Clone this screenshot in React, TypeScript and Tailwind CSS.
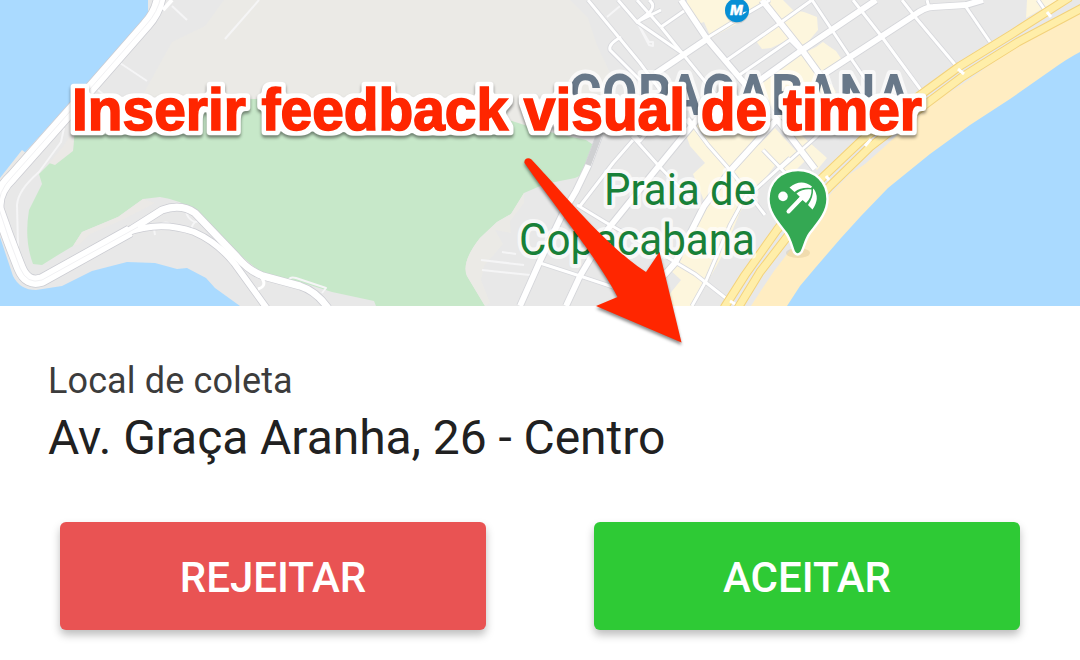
const water = '#aadaff';

const minorRoads = [
  'M588 0 L640 63 L660 90 L690 125',
  'M621 37 Q608 44 610 50 L640 80',
  'M618 0 L637 22 L661 10 M649 0 Q656 5 650 12 L637 22',
  'M637 22 L682 53 L712 90 L732 118',
  'M637 0 L661 27',
  'M661 27 L684 11',
  'M682 53 L661 27',
  'M707 38 L746 14 L770 0',
  'M727 60 L780 23 L812 0',
  'M738 76 L790 40 L800 50',
  'M812 0 L832 30 L850 57 L870 86',
  'M853 0 L882 37 L921 90',
  'M902 0 L916 18 L958 68',
  'M927 0 L929 7',
  'M966 7 L990 42',
  'M1038 0 L1047 13',
  'M633 140 L613 163 L580 206',
  'M650 130 L640 141 L619 118 M632 136 L658 165 L690 198',
  'M688 118 L708 145 L730 170 L752 198 L765 215',
  'M577 205 L605 222 L655 250 L695 274 L732 303',
  'M540 263 L580 276 L622 290',
  'M780 169 L815 138 L840 112',
  'M748 192 L730 225 L706 281 L692 306',
  'M763 150 L790 178 M755 190 L790 158',
];

const midRoads = [
  'M681 0 L707 39 L745 84 L780 123 L815 169',
  'M762 0 L802 50 L828 86',
  'M655 74 L707 39',
  'M752 86 L802 50 L876 0',
  'M824 74 L913 16 Q925 7 933 7 L966 5 L983 0',
  'M600 134 L588 166 L576 191 L563 213 L540 261 L520 306',
  'M705 110 L680 140 L658 167 L608 229 L580 276 L566 306',
  'M778 118 L730 171 L704 206 L675 263 L637 306',
];

const faintPaths = [
  'M172 6 L187 20',
  'M120 63 L147 81',
  'M259 0 L225 39',
  'M98 90 L108 98 M607 17 L620 6',
  'M64 128 L61 142 L39 172 Q18 190 17 205 L18 246 L11 250',
  'M637 22 L649 42 L653 42 L653 46 L649 45 Z',
  'M159 226 Q166 219 172 226 M154 229 L155 235',
  'M186 211 Q187 219 195 222 L203 220 M195 222 Q191 226 192 230',
  'M288 281 Q290 276 296 278 L326 288 L322 293',
  'M502 252 L516 254 M481 260 L524 265 M482 270 L530 275',
];

const highway = [
  'M160 -4 Q158 12 146 25 L90 89 L12 177 Q-4 192 -2 209 Q8 238 20 268 Q27 285 42 280 L132 229 L162 210 Q181 203 195 213 L237 257 Q249 271 263 276 L300 286 Q316 291 328 308',
  'M126 233 Q160 220 194 232 Q217 242 234 263 L268 310',
  'M261 277 Q268 286 258 289',
];

const coast = [
  'M724 308 L745 275 L777 230 L798 203 L823 177 L862 140 L908 104 L960 66 L1012 34 L1070 -3',
  'M738 308 L760 272 L787 237 L806 212 L830 186 L870 147 L914 113 L962 77 L1018 42 L1084 7',
];

const shops = [
  'M687 0 L762 0 L757 8 L740 22 L711 38 L704 22 L698 24 L694 15 L687 7 Z',
  'M765 0 L783 0 L793 10 L804 12 L817 17 L818 30 L808 42 L800 46 L776 15 Z',
  'M756 41 L778 26 L790 39 L771 48 L762 49 Z',
  'M802 54 L816 47 L823 42 L830 47 L836 51 L842 60 L824 72 L836 92 L814 120 L783 119 L827 158 L817 170 L808 160 L770 110 L755 86 Z',
  'M685 132 L705 115 L777 120 L758 143 L776 164 L740 212 L722 256 L694 306 L660 306 L681 280 L668 268 L705 203 L693 174 L705 163 L690 146 Z',
  'M790 176 L805 161 L775 128 L757 147 Z',
  'M1027 0 L1058 0 L1026 18 Z M1035 32 L1058 20 L1055 29 Z',
];

function MapDrawing() {
  return (
    <svg className="block h-[306px] w-full" viewBox="0 0 1080 306" aria-hidden="true">
      <rect width="1080" height="306" fill="#e8e8e8" />
      <path d="M224 0 L205 26 L172 42 L140 100 L300 130 L530 130 L612 100 L610 73 L597 45 L588 18 L570 0 Z" fill="#ebeae6" />
      <path d="M75 100 L258 99 L400 98 L512 121 L540 130 L586 140 L595 146 L590 171 L575 178 L545 184 L524 193 L511 214 L497 222 L480 238 Q461 262 467 276 L485 306 L376 306 L374 301 L332 292 L310 285 L263 274 L240 255 L195 211 Q178 199 160 197 L143 199 L118 217 L82 232 L73 246 L58 255 L42 265 L33 264 Q24 240 29 210 L42 184 L39 174 L50 163 L73 150 Z" fill="#c7e8c9" />
      <path d="M524 193 L511 214 L497 222 L480 238 Q461 262 467 276 L485 306 L490 303 L481 280 L484 266 L503 244 L495 230 L511 233 L510 221 L524 203 Z" fill="#ebeae6" />
      <path d="M75 128 L64 145 L49 163 L55 165 L73 151 Z M143 199 L118 217 L82 232 L73 246 L80 244 L90 234 L122 220 L155 203 Z" fill="#ebe9e6" />
      <path d="M0 0 L148 0 L148 16 L0 180 Z" fill={water} />
      <path d="M0 178 L22 150 L26 153 L0 184 Z" fill="#ebe9e6" />
      <path d="M0 237 L13 276 Q20 290 36 290 L62 286 L92 271 L127 262 L155 263 L177 269 L187 268 L206 278 L215 288 L240 306 L0 306 Z" fill={water} />
      {shops.map((d) => <path key={d} d={d} fill="#fdf6dd" />)}
      <path d="M751 306 L760 292 L774 271 L791 249 L832 192 L850 174 L865 164 L882 149 L918 116 L935 100 L955 89 L973 77 L1000 57 L1030 38 L1080 10 L1080 60 L790 306 Z" fill="#ffedc2" />
      <path d="M787 306 L800 286 L816 267 L841 238 L861 216 L888 188 L930 154 L970 125 L1010 99 L1050 71 Q1068 58 1080 52 L1080 306 Z" fill={water} />

      <g fill="none" strokeLinejoin="round">
        {faintPaths.map((d) => <path key={d} d={d} stroke="#f5f5f6" strokeWidth="2" />)}
        {minorRoads.map((d) => <path key={d} d={d} stroke="#d7d8dc" strokeWidth="4.6" />)}
        {midRoads.map((d) => <path key={d} d={d} stroke="#d5d6da" strokeWidth="7.6" />)}
        {minorRoads.map((d) => <path key={d} d={d} stroke="#fff" strokeWidth="3" />)}
        {midRoads.map((d) => <path key={d} d={d} stroke="#fff" strokeWidth="5.8" />)}
        <path d="M602 128 L588 165" stroke="#cfd0d2" strokeWidth="6" />
        <path d={highway[0]} stroke="#cbccd2" strokeWidth="8.500" />
        <path d={highway[1]} stroke="#cbccd2" strokeWidth="7.5" />
        <path d="M160 -4 Q158 12 146 25 L90 89 L12 177 Q-4 192 -2 209 Q8 238 20 268 Q27 285 42 280 L130 231" stroke="#cbccd2" strokeWidth="13" />
        <path d="M172 0 L163 10" stroke="#fff" strokeWidth="4" />
        <path d={highway[0]} stroke="#fff" strokeWidth="7" />
        <path d={highway[1]} stroke="#fff" strokeWidth="6" />
        <path d={highway[2]} stroke="#fff" strokeWidth="3" />
        <path d="M160 -4 Q158 12 146 25 L90 89 L12 177 Q-4 192 -2 209 Q8 238 20 268 Q27 285 42 280 L130 231" stroke="#fff" strokeWidth="11.5" />
        <path d="M161 -4 Q158 12 146 25 L90 89 L12 177 Q-3 192 -1 209 Q8 238 20 268 Q27 285 42 280 L138 227" stroke="#f1f1f3" strokeWidth="1" />
        {coast.map((d) => <path key={d} d={d} stroke="#f3d27b" strokeWidth="9" />)}
        {coast.map((d) => <path key={d} d={d} stroke="#ffeea9" strokeWidth="7" />)}
        <path d="M958 69 L964 74 M1047 12 L1051 17 M865 146 L871 139 M826 176 L829 180 M730 301 L735 304" stroke="#fff" strokeWidth="3" />
      </g>

      <g fontFamily="Roboto, sans-serif" strokeLinejoin="round" paintOrder="stroke" stroke="#fff" strokeOpacity=".68" strokeWidth="8">
        <text transform="translate(568 115) scale(.9 1)" fontSize="57" fontWeight="700" fill="#687889" textLength="381">COPACABANA</text>
        <text x="604" y="205" fontSize="44.500" fill="#188038" textLength="152" lengthAdjust="spacingAndGlyphs">Praia de</text>
        <text x="519" y="255" fontSize="44.500" fill="#188038" textLength="236" lengthAdjust="spacingAndGlyphs">Copacabana</text>
      </g>

      <circle cx="737" cy="11.500" r="12" fill="#b8b9bb" opacity=".6" />
      <circle cx="737" cy="10.300" r="12" fill="#078fd5" />
      <text x="730" y="14.800" fontFamily="Inter, sans-serif" fontSize="13.500" fontWeight="800" fontStyle="italic" fill="#fff" stroke="#fff" strokeWidth=".3">M</text>
      <path d="M742.500 14.800 L747 11.500 L743.500 12 Z" fill="#fff" />

      <ellipse cx="798" cy="253" rx="12" ry="5" fill="#c6aa72" opacity=".25" />
      <path d="M798 170 C781 170 768.500 182 768.500 199 C768.500 213 779 224 786 233 C791 240 792 248 794 252 Q797.500 257 801.500 252 C804 248 805 240 810 233 C817 224 827.500 213 827.500 199 C827.500 182 815 170 798 170 Z" fill="#34a853" stroke="#fff" strokeWidth="2.400" />
      <circle cx="783" cy="196.400" r="4.800" fill="#fff" />
      <path d="M788.500 211.500 L801 198.500" stroke="#fff" strokeWidth="4" strokeLinecap="round" />
      <path d="M789.500 187.500 Q801 178 812 186.500 L811 188 Q801 187 794.500 192 Z" fill="#fff" />
      <path d="M796.500 193.500 Q803 188.500 811.500 189.500 Q812 197 806 203 L802.500 200 L799 202.500 L797 200 L800 197 Z" fill="#fff" />
      <path d="M813.500 188.500 Q820.500 198 812.500 209.500 L808 205 Q813.500 197 813 189.500 Z" fill="#fff" />
    </svg>
  );
}

function Annotation() {
  return (
    <svg className="pointer-events-none absolute left-0 top-0 h-[360px] w-[1080px]" viewBox="0 0 1080 360">
      <defs>
        <filter id="lift" x="-10%" y="-20%" width="120%" height="150%" colorInterpolationFilters="sRGB">
          <feDropShadow dx="0" dy="2.500" stdDeviation="1.800" floodColor="#000" floodOpacity=".45" />
        </filter>
        <filter id="halo" x="-5%" y="-30%" width="110%" height="170%" colorInterpolationFilters="sRGB">
          <feMorphology in="SourceAlpha" operator="dilate" radius="3.500" result="wide" />
          <feGaussianBlur in="wide" stdDeviation="1.500" result="soft" />
          <feComponentTransfer in="soft" result="edge">
            <feFuncR type="linear" slope="0" intercept="1" />
            <feFuncG type="linear" slope="0" intercept="1" />
            <feFuncB type="linear" slope="0" intercept="1" />
            <feFuncA type="linear" slope="4" intercept="-1" />
          </feComponentTransfer>
          <feMerge result="joined">
            <feMergeNode in="edge" />
            <feMergeNode in="SourceGraphic" />
          </feMerge>
          <feDropShadow in="joined" dx="0" dy="2.500" stdDeviation="1.500" floodColor="#000" floodOpacity=".45" />
        </filter>
      </defs>
      <text x="72" y="129.800" filter="url(#halo)" fontFamily="Liberation Sans, sans-serif" fontSize="58.500" fontWeight="700" fill="#ff2600" stroke="#ff2600" strokeWidth="1.600" textLength="850" lengthAdjust="spacingAndGlyphs">Inserir feedback visual de timer</text>
      <path filter="url(#lift)" d="M524.500 163 C523.500 159 528 156.500 531.500 159.500 C565 195 606 246 646 272 L659.500 252 L681.500 342.500 L596 306 L617.500 297 C597 257 554 206 524.500 163 Z" fill="#ff2600" />
    </svg>
  );
}

export default function App() {
  return (
    <main className="relative h-[660px] w-[1080px] overflow-hidden bg-white font-[Roboto,sans-serif]">
      <MapDrawing />
      <section className="flex h-[354px] flex-col px-12 pt-[54px]">
        <p className="h-[42px] text-[36px] leading-[42px] tracking-[0.12px] text-[#3c3c3c]">Local de coleta</p>
        <h1 className="mt-2 h-14 whitespace-nowrap text-[48px] font-normal leading-[56px] tracking-[-0.06px] text-[#212121]">Av. Graça Aranha, 26 - Centro</h1>
        <div className="mt-14 flex gap-[108px] px-3 text-[42px] font-medium text-white">
          <button className="h-[108px] flex-1 rounded-md bg-[#e95353] pt-0.5 shadow-[0_5px_8px_rgba(0,0,0,0.26)]">REJEITAR</button>
          <button className="h-[108px] flex-1 rounded-md bg-[#2eca35] pt-0.5 shadow-[0_5px_8px_rgba(0,0,0,0.26)]">ACEITAR</button>
        </div>
      </section>
      <Annotation />
    </main>
  );
}
